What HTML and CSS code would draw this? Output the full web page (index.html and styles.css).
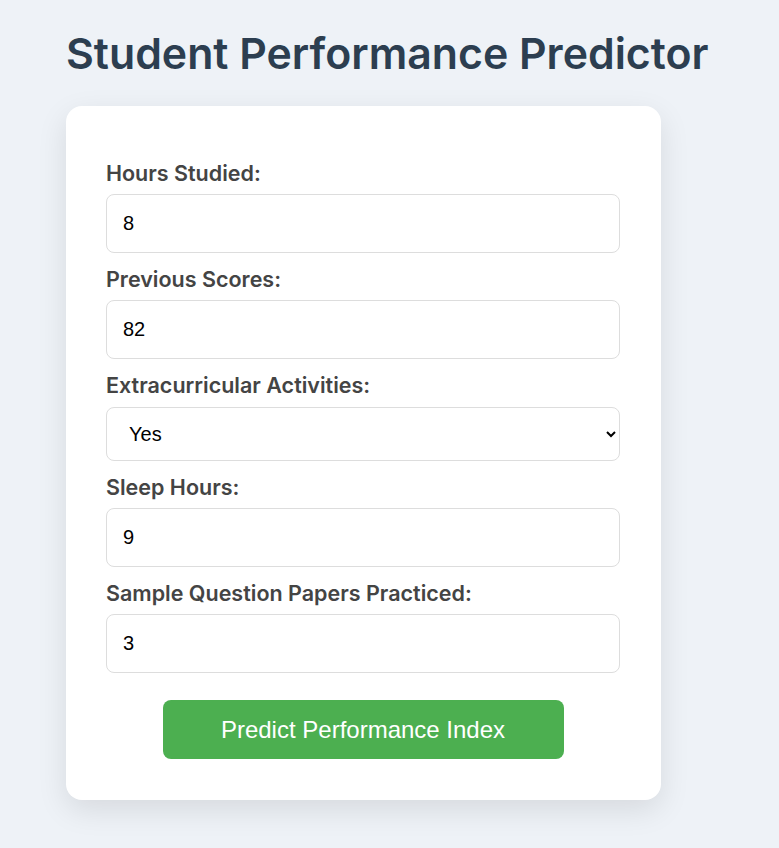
FILE: index.html
```html
<!DOCTYPE html>
<html>
<head>
<meta charset="utf-8">
<link rel="stylesheet" href="styles.css">
</head>
<body>
<div class="page">
  <h1 class="title">Student Performance Predictor</h1>
  <form class="card">
    <div class="group">
      <label class="label">Hours Studied:</label>
      <input class="field" type="number" value="8">
    </div>
    <div class="group">
      <label class="label">Previous Scores:</label>
      <input class="field" type="number" value="82">
    </div>
    <div class="group">
      <label class="label">Extracurricular Activities:</label>
      <select class="field select">
        <option>Yes</option>
        <option>No</option>
      </select>
    </div>
    <div class="group">
      <label class="label">Sleep Hours:</label>
      <input class="field" type="number" value="9">
    </div>
    <div class="group">
      <label class="label">Sample Question Papers Practiced:</label>
      <input class="field" type="number" value="3">
    </div>
    <div class="actions">
      <button class="btn" type="button">Predict Performance Index</button>
    </div>
  </form>
</div>
</body>
</html>
```

FILE: styles.css
```css
html, body {
  margin: 0;
  padding: 0;
  background: #eef2f7;
}
body {
  font-family: Inter, "Liberation Sans", sans-serif;
}
.page {
  padding: 0 0 48px 66px;
}
.title {
  margin: 0;
  padding-top: 29px;
  height: 106px;
  box-sizing: border-box;
  font-size: 42.8px;
  line-height: 50px;
  font-weight: 600;
  color: #2c3e50;
  white-space: nowrap;
}
.card {
  width: 595px;
  box-sizing: border-box;
  background: #fff;
  border-radius: 16px;
  padding: 54px 41px 41px 40px;
  box-shadow: 0 10px 30px rgba(0, 0, 0, 0.1);
}
.group {
  display: flex;
  flex-direction: column;
  margin-bottom: 13px;
}
.label {
  font-size: 21.5px;
  line-height: 26px;
  font-weight: 600;
  color: #444;
  margin-bottom: 8px;
}
.field {
  height: 59px;
  box-sizing: border-box;
  border: 1px solid #ddd;
  border-radius: 8px;
  padding: 0 16px;
  font-family: "Liberation Sans", Arial, sans-serif;
  font-size: 20px;
  color: #000;
  background: #fff;
  outline: none;
  -moz-appearance: textfield;
}
.field::-webkit-inner-spin-button,
.field::-webkit-outer-spin-button {
  -webkit-appearance: none;
  margin: 0;
}
.select {
  height: 54px;
  padding: 0 16px 0 18px;
  margin-top: 1px;
}
.actions {
  display: flex;
  justify-content: center;
  padding-top: 14px;
}
.btn {
  width: 401px;
  height: 59px;
  border: none;
  border-radius: 8px;
  background: #4caf50;
  color: #fff;
  font-family: "Liberation Sans", Arial, sans-serif;
  font-size: 24px;
  cursor: pointer;
}
```
